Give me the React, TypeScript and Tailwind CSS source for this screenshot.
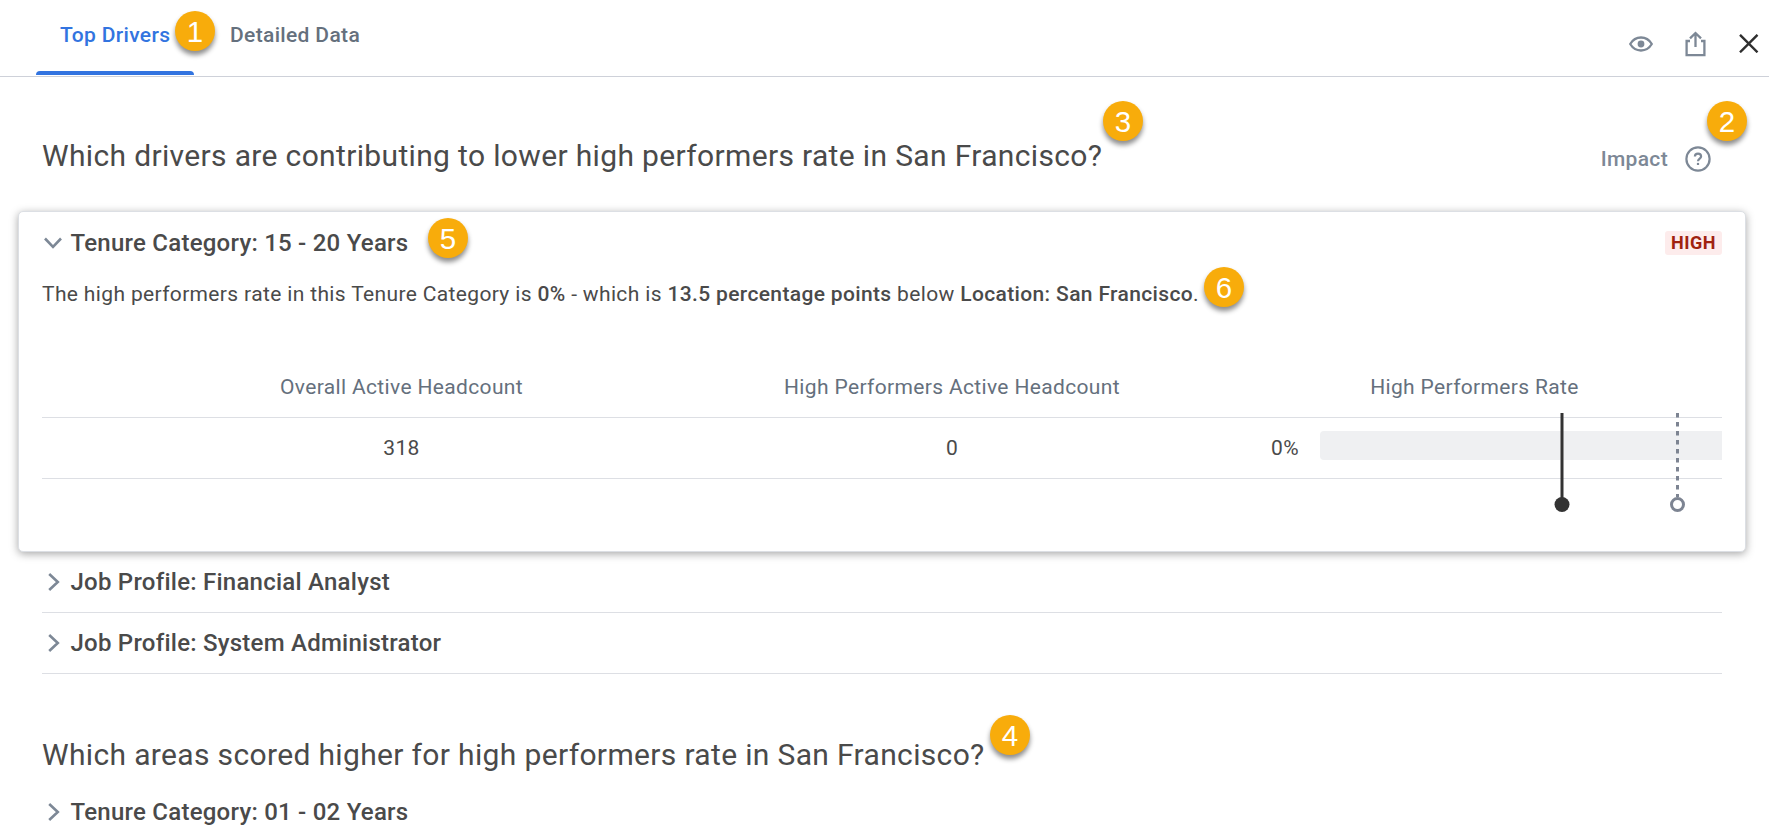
interface MarkerProps {
  n: number;
  className: string;
}

// Numbered callout that floats over the page
function Marker({ n, className }: MarkerProps) {
  return (
    <span
      className={`absolute z-10 flex h-10 w-10 items-center justify-center rounded-full bg-[#f8ac0b] pt-px font-['Liberation_Sans',sans-serif] text-[29.5px] leading-none tracking-normal text-white shadow-[0_4px_5px_rgba(0,0,0,0.45)] ${className}`}
    >
      {n}
    </span>
  );
}

function ChevronRight() {
  return (
    <svg className="h-[18px] w-[12px]" viewBox="0 0 12 18" fill="none" stroke="#7d8896" strokeWidth="2.6">
      <path d="M1.2 1L9.8 9L1.2 17" />
    </svg>
  );
}

function ChevronDown() {
  return (
    <svg className="h-[12px] w-[18px]" viewBox="0 0 18 12" fill="none" stroke="#7d8896" strokeWidth="2.6">
      <path d="M1 1.5L9 9.8L17 1.5" />
    </svg>
  );
}

function DriverRow({ title, divider = true }: { title: string; divider?: boolean }) {
  return (
    <div className={`flex h-[61px] items-center pl-[6px] ${divider ? "border-b border-[#dddfe4]" : ""}`}>
      <ChevronRight />
      <span className="ml-[10.5px] text-[24px] leading-7 font-medium tracking-[0.24px]">{title}</span>
    </div>
  );
}

export default function App() {
  return (
    <div className="relative h-[840px] w-full overflow-hidden bg-white font-[Roboto,sans-serif] text-[#4a4a4a]">
      <header className="relative flex h-[77px] justify-between border-b border-[#ced1d9]">
        <nav className="flex pl-9 text-[21px] font-medium tracking-[0.34px]">
          <div className="flex w-[158px] flex-col justify-between text-[#3274e0]">
            <span className="mt-[21px] pl-6 leading-7 whitespace-nowrap">Top Drivers</span>
            <span className="mb-px h-1 rounded-t-[4px] bg-[#3274e0]" />
          </div>
          <span className="mt-[21px] ml-[36px] leading-7 whitespace-nowrap text-[#65707d]">Detailed Data</span>
        </nav>
        <Marker n={1} className="top-[11px] left-[175px]" />

        <div className="mt-[30px] flex h-[27px] items-center pr-[10px]">
          <svg className="h-[16px] w-[24px]" viewBox="0 0 24 16" fill="none" stroke="#7d8896" strokeWidth="2.3">
            <path d="M1.2 8C3.6 4 7.4 1.5 12 1.5S20.4 4 22.8 8C20.4 12 16.6 14.5 12 14.5S3.6 12 1.2 8z" strokeLinejoin="round" />
            <circle cx="12" cy="8" r="3.4" fill="#7d8896" stroke="none" />
          </svg>
          <svg className="ml-8 h-[26px] w-[21px]" viewBox="0 0 21 26" fill="none" stroke="#7d8896" strokeWidth="2.3">
            <path d="M5 10H1.6V24.2H19.4V10H16" />
            <path d="M10.5 16V2M5 7.4L10.500 2L16 7.400" />
          </svg>
          <svg className="ml-[33px] h-[19px] w-[20px]" viewBox="0 0 20 19" fill="none" stroke="#2f2f2f" strokeWidth="2.4">
            <path d="M1 0.8L18.5 18.3M18.5 0.8L1 18.3" />
          </svg>
        </div>
      </header>

      <section className="relative">
        <div className="flex h-[134px] items-center justify-between pt-[24px] pr-[58px] pl-[42px]">
          <h1 className="text-[30px] leading-9 tracking-[0.345px]">
            Which drivers are contributing to lower high performers rate in San Francisco?
          </h1>
          <div className="flex items-center pt-[6px] text-[21px] font-medium tracking-[0.34px] text-[#7d8896]">
            <span className="pt-0.5">Impact</span>
            <svg className="ml-[17px] h-[26px] w-[26px]" viewBox="0 0 26 26" fill="none" stroke="#7d8896" strokeWidth="2.2">
              <circle cx="13" cy="13" r="11.6" />
              <path d="M9.9 10.6C9.9 8.800 11.200 7.700 13 7.700S16.100 8.800 16.100 10.400C16.100 12.500 13 12.600 13 15.200" />
              <path d="M13 16.900V19" />
            </svg>
          </div>
        </div>
        <Marker n={3} className="top-[24px] left-[1103px]" />
        <Marker n={2} className="top-[24px] left-[1707px]" />
      </section>

      <section className="relative mr-[23px] ml-[18px] h-[341px] rounded-[5px] border border-[#dcdfe4] bg-white pr-[23px] pl-[23px] shadow-[0_2px_9px_rgba(0,0,0,0.35)]">
        <div className="flex h-[61px] items-center pl-[2px]">
          <ChevronDown />
          <span className="ml-[8.5px] text-[24px] leading-7 font-medium tracking-[0.24px]">Tenure Category: 15 - 20 Years</span>
          <span className="ml-auto flex h-6 w-[57px] items-center justify-center rounded-[3px] bg-[#fdecec] text-[18px] leading-none font-bold tracking-[0.5px] text-[#a0220f]">
            HIGH
          </span>
        </div>
        <Marker n={5} className="top-[6px] left-[409px]" />

        <p className="mt-[7px] text-[21px] leading-7 tracking-[0.355px]">
          The high performers rate in this Tenure Category is <b className="font-medium">0%</b> - which is{" "}
          <b className="font-medium">13.5 percentage points</b> below{" "}
          <b className="font-medium">Location: San Francisco</b>.
        </p>
        <Marker n={6} className="top-[55px] left-[1185px]" />

        <div className="mt-[47px] text-[21px] tracking-[0.35px]">
          <div className="flex h-[63px] items-center border-b border-[#dddfe4] pt-[4px] text-[#65707d]">
            <span className="w-[169px]" />
            <span className="w-[381px] text-center">Overall Active Headcount</span>
            <span className="w-[720px] text-center">High Performers Active Headcount</span>
            <span className="w-[325px] text-center">High Performers Rate</span>
          </div>
          <div className="relative flex h-[61px] items-center border-b border-[#dddfe4]">
            <span className="w-[169px]" />
            <span className="w-[381px] pt-0.5 text-center">318</span>
            <span className="w-[720px] pt-0.5 text-center">0</span>
            <span className="-ml-[41px] w-[28px] pt-0.5">0%</span>
            <span className="mb-[5px] ml-[21px] h-[29px] flex-1 rounded-l-[4px] bg-[#eff0f2]" />
            {/* Benchmark pins */}
            <svg className="absolute -top-[5px] right-0 h-[102px] w-[180px]" viewBox="0 0 180 102" fill="none">
              <path d="M20 0V86" stroke="#333" strokeWidth="3" />
              <circle cx="20" cy="91.5" r="7.5" fill="#333" />
              <path d="M135.5 0V84" stroke="#7d8492" strokeWidth="3" strokeDasharray="4.5 4.5" />
              <circle cx="135.5" cy="91.5" r="6" fill="#fff" stroke="#7d8492" strokeWidth="3" />
            </svg>
          </div>
        </div>
      </section>

      <div className="pr-[47px] pl-[42px]">
        <DriverRow title="Job Profile: Financial Analyst" />
        <DriverRow title="Job Profile: System Administrator" />
      </div>

      <section className="relative pr-[47px] pl-[42px]">
        <h2 className="mb-[8px] pt-[63px] text-[30px] leading-9 tracking-[0.345px]">
          Which areas scored higher for high performers rate in San Francisco?
        </h2>
        <DriverRow title="Tenure Category: 01 - 02 Years" divider={false} />
        <Marker n={4} className="top-[41px] left-[990px]" />
      </section>
    </div>
  );
}
